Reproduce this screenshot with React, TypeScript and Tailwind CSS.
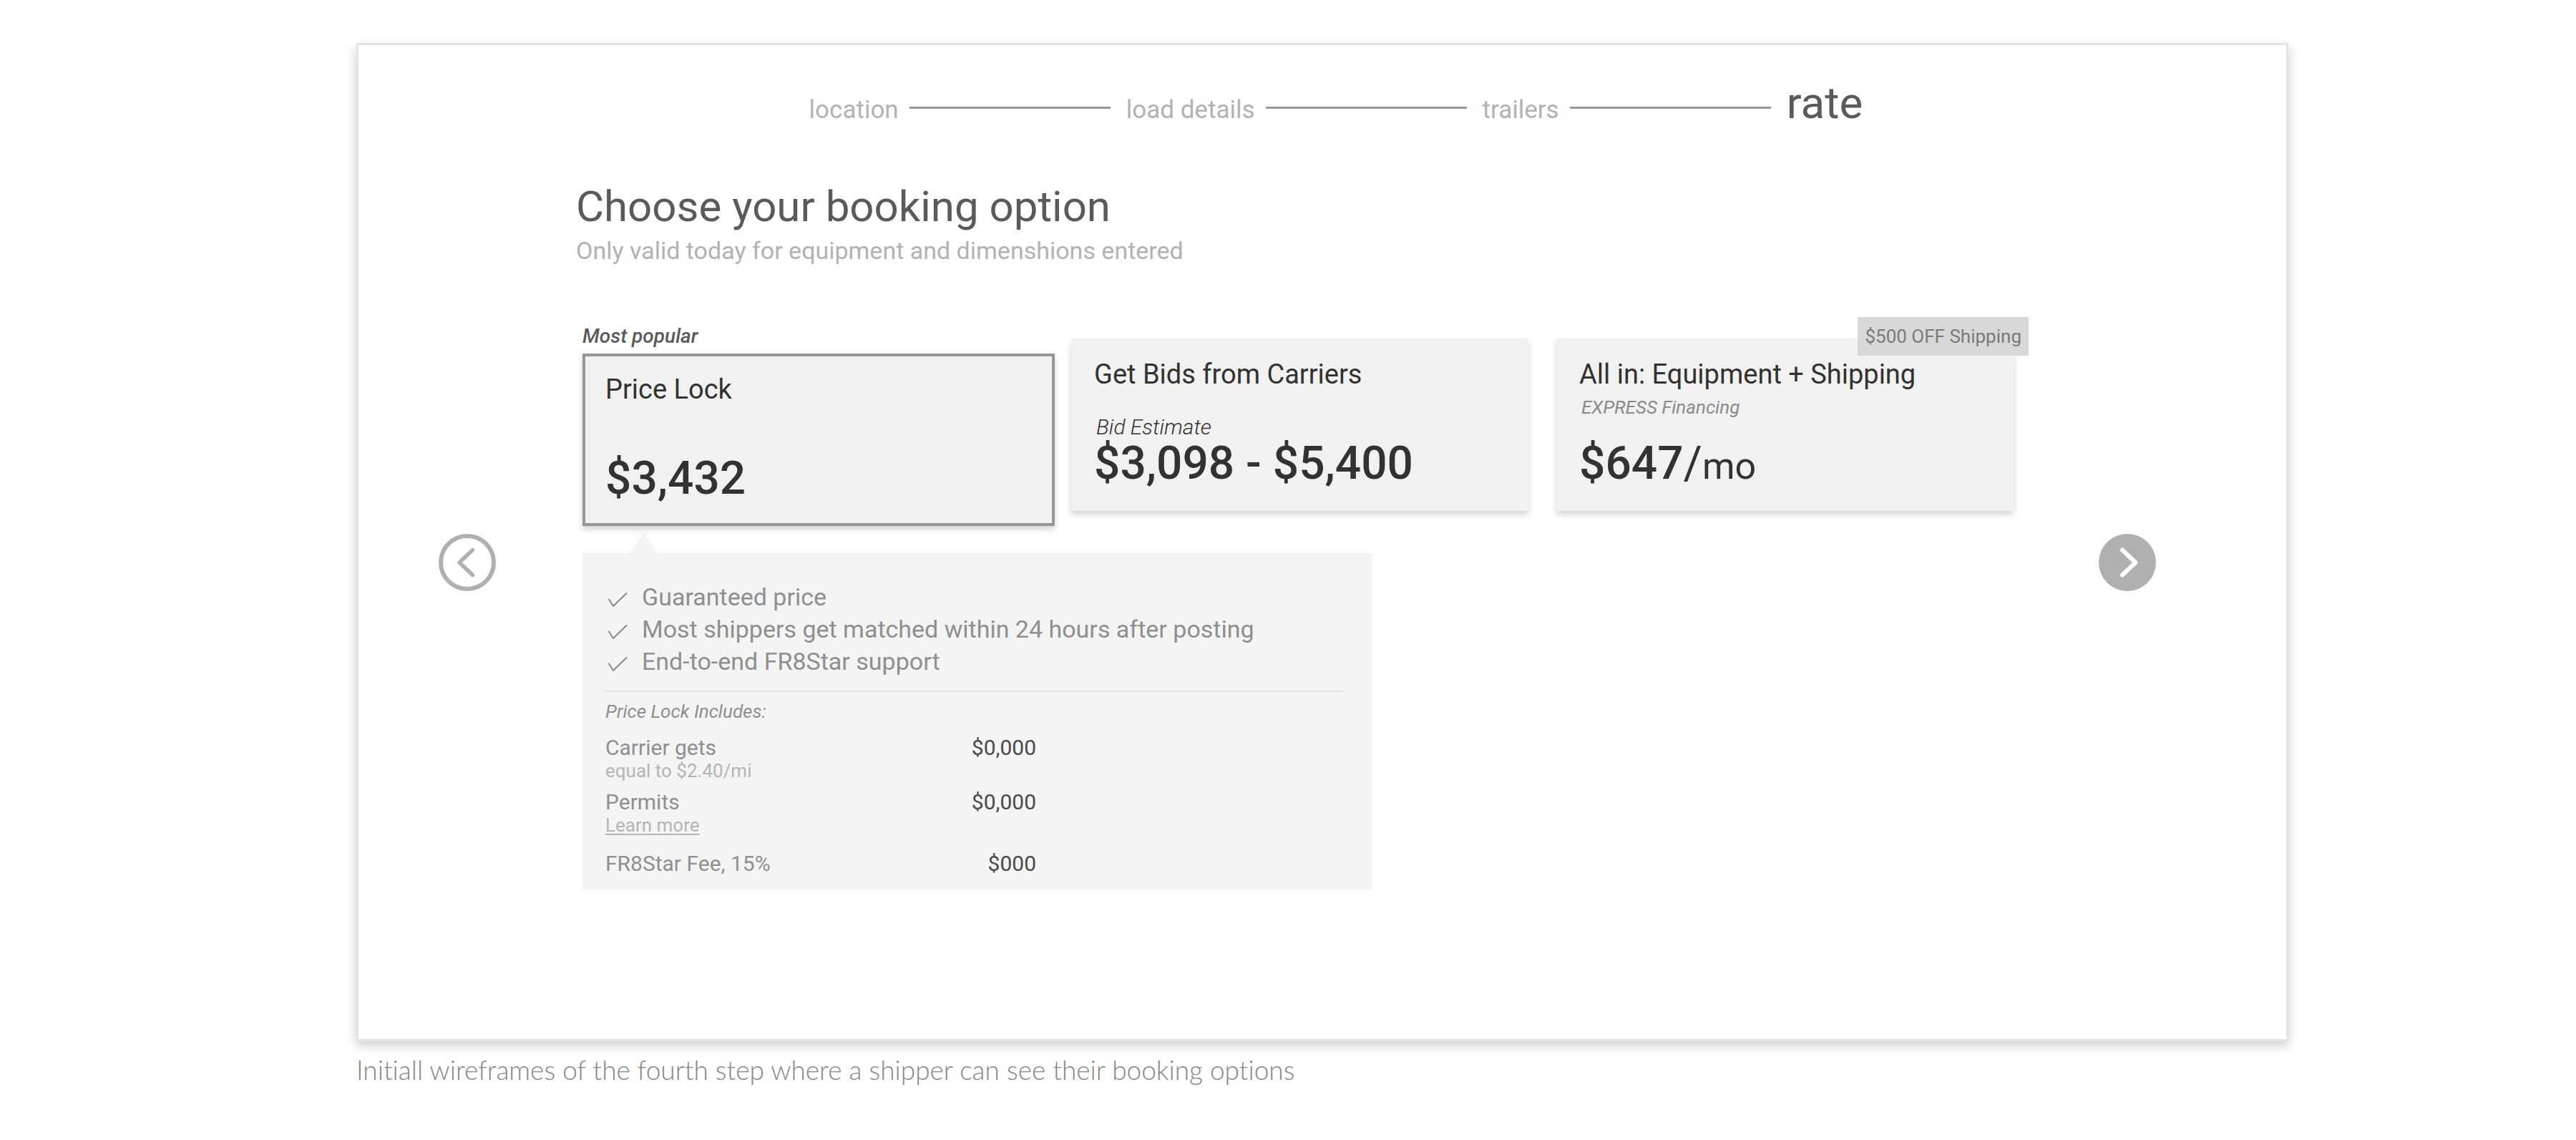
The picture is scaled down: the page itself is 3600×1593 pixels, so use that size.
import { Fragment, type ReactNode } from "react";

const steps = ["location", "load details", "trailers", "rate"];

const benefits = [
  "Guaranteed price",
  "Most shippers get matched within 24 hours after posting",
  "End-to-end FR8Star support",
];

function Stepper() {
  return (
    <nav aria-label="Booking steps" className="flex items-baseline justify-center pl-[38px] leading-none">
      {steps.map((step, i) => {
        const current = i === steps.length - 1;
        return (
          <Fragment key={step}>
            {i > 0 && <span className="mt-9 mr-[22px] ml-[15px] h-[3px] w-[281px] self-start bg-[#979797]" />}
            {current ? (
              <span aria-current="step" className="text-[62px] text-[#5a5a5a]">
                {step}
              </span>
            ) : (
              <a href="#" className="text-[35px] text-[#b2b2b2]">
                {step}
              </a>
            )}
          </Fragment>
        );
      })}
    </nav>
  );
}

type OptionProps = {
  title: string;
  note?: string;
  noteClass?: string;
  selected?: boolean;
  children: ReactNode;
};

function OptionCard({ title, note, noteClass = "", selected = false, children }: OptionProps) {
  return (
    <button
      type="button"
      aria-pressed={selected}
      className={`flex w-full flex-col bg-[#f1f1f1] text-left text-[#323230] shadow-[0_5px_8px_rgba(0,0,0,0.17)] ${
        selected ? "border-4 border-[#979797] px-7 pt-[22px] pb-[26px]" : "px-8 pt-[26px] pb-[30px]"
      }`}
    >
      <span className="text-[38px] leading-[48px]">{title}</span>
      <span className="flex h-[65px] pl-[3px] leading-[30px] italic">
        {note && <span className={noteClass}>{note}</span>}
      </span>
      <span className="text-[64px] leading-[72px] font-medium whitespace-nowrap">{children}</span>
    </button>
  );
}

function CheckMark() {
  return (
    <svg
      viewBox="0 0 32 30"
      className="h-[30px] w-8 shrink-0"
      fill="none"
      stroke="#8a8a8a"
      strokeWidth="2"
      strokeLinecap="round"
      strokeLinejoin="round"
      aria-hidden="true"
    >
      <path d="M5 17.5 11 27 29.5 9" />
    </svg>
  );
}

function PriceDetails() {
  return (
    <section className="relative mt-[38px] w-full max-w-[1103px] bg-[#f4f4f4] pt-[39px] pr-10 pb-[19px] pl-8">
      <svg viewBox="0 0 41 30" className="absolute -top-[29px] left-[65px] h-[30px] w-[41px]" aria-hidden="true">
        <path d="M20.5 0 41 30H0Z" fill="#f4f4f4" />
      </svg>
      <ul className="text-[34px] leading-[45px] text-[#8f8f8f]">
        {benefits.map((b) => (
          <li key={b} className="flex items-center gap-[19px]">
            <CheckMark />
            {b}
          </li>
        ))}
      </ul>
      <hr className="mt-[18px] border-t-2 border-[#e3e3e3]" />
      <table className="mt-[11px] w-[602px] text-[30px] leading-[36px] text-[#8f8f8f]">
        <caption className="pb-[17px] text-left text-[26px] leading-[32px] italic">Price Lock Includes:</caption>
        <tbody>
          <tr className="align-top">
            <th scope="row" className="pb-3 text-left font-normal">
              Carrier gets
              <span className="block text-[26px] leading-[28px] text-[#b5b5b5]">equal to $2.40/mi</span>
            </th>
            <td className="text-right text-[#4a4a4a]">$0,000</td>
          </tr>
          <tr className="align-top">
            <th scope="row" className="pb-[22px] text-left font-normal">
              Permits
              <a href="#" className="block text-[26px] leading-[28px] text-[#b5b5b5] underline decoration-2 underline-offset-3">
                Learn more
              </a>
            </th>
            <td className="text-right text-[#4a4a4a]">$0,000</td>
          </tr>
          <tr className="align-top">
            <th scope="row" className="text-left font-normal">
              FR8Star Fee, 15%
            </th>
            <td className="text-right text-[#4a4a4a]">$000</td>
          </tr>
        </tbody>
      </table>
    </section>
  );
}

export default function App() {
  return (
    <main className="min-h-screen bg-white pt-[60px] pr-[402px] pl-[498px] font-['Roboto',sans-serif]">
      <figure>
        <div className="border-[3px] border-[#e4e4e4] bg-white pt-[50px] pb-20 shadow-[0_6px_14px_rgba(0,0,0,0.2)]">
          <Stepper />
          <div className="mt-[25px] flex items-center pr-[182px] pl-28">
            <button type="button" aria-label="Previous step" className="shrink-0">
              <svg viewBox="0 0 80 80" className="size-20" fill="none" stroke="#b0b0b0" strokeLinecap="round" strokeLinejoin="round">
                <circle cx="40" cy="40" r="37" strokeWidth="6" />
                <path d="M47.5 22.5 29 40l18.5 17.5" strokeWidth="5.5" />
              </svg>
            </button>
            <div className="ml-28 min-w-0 flex-1 pt-[54px] pb-32">
              <h1 className="text-[60px] leading-[70px] text-[#5a5a5a]">Choose your booking option</h1>
              <p className="text-[34px] leading-[52px] text-[#b2b2b2]">
                Only valid today for equipment and dimenshions entered
              </p>
              <div className="mt-[76px] mr-[119px] ml-[9px]">
                <div className="grid grid-cols-[660fr_639fr_655fr] items-start gap-x-[23px]">
                  <div>
                    <p className="mb-1.5 text-[28px] leading-[36px] font-medium text-[#5a5a5a] italic">Most popular</p>
                    <OptionCard title="Price Lock" selected>
                      $3,432
                    </OptionCard>
                  </div>
                  <div className="mt-[21px]">
                    <OptionCard title="Get Bids from Carriers" note="Bid Estimate" noteClass="self-end text-[30px] font-light">
                      $3,098 - $5,400
                    </OptionCard>
                  </div>
                  <div className="relative mt-[21px] ml-4">
                    <OptionCard
                      title="All in: Equipment + Shipping"
                      note="EXPRESS Financing"
                      noteClass="self-start pt-[7px] text-[26px] text-[#8a8a8a]"
                    >
                      $647<span className="font-normal">/</span>
                      <span className="text-[52px] leading-none font-normal">mo</span>
                    </OptionCard>
                    <span className="absolute -top-[30px] -right-[21px] bg-[#d8d8d8] px-[10px] text-[26px] leading-[54px] text-[#7a7a7a]">
                      $500 OFF Shipping
                    </span>
                  </div>
                </div>
                <PriceDetails />
              </div>
            </div>
            <button type="button" aria-label="Next step" className="shrink-0">
              <svg viewBox="0 0 80 80" className="size-20" fill="none" strokeLinecap="round" strokeLinejoin="round">
                <circle cx="40" cy="40" r="40" fill="#b0b0b0" />
                <path d="M33 22.5 51.5 40 33 57.5" stroke="#fff" strokeWidth="6" />
              </svg>
            </button>
          </div>
        </div>
        <figcaption className="mt-[18px] font-['Lato',sans-serif] text-[37px] leading-[44px] font-light text-[#858585] [font-variant-ligatures:none]">
          Initiall wireframes of the fourth step where a shipper can see their booking options
        </figcaption>
      </figure>
    </main>
  );
}
